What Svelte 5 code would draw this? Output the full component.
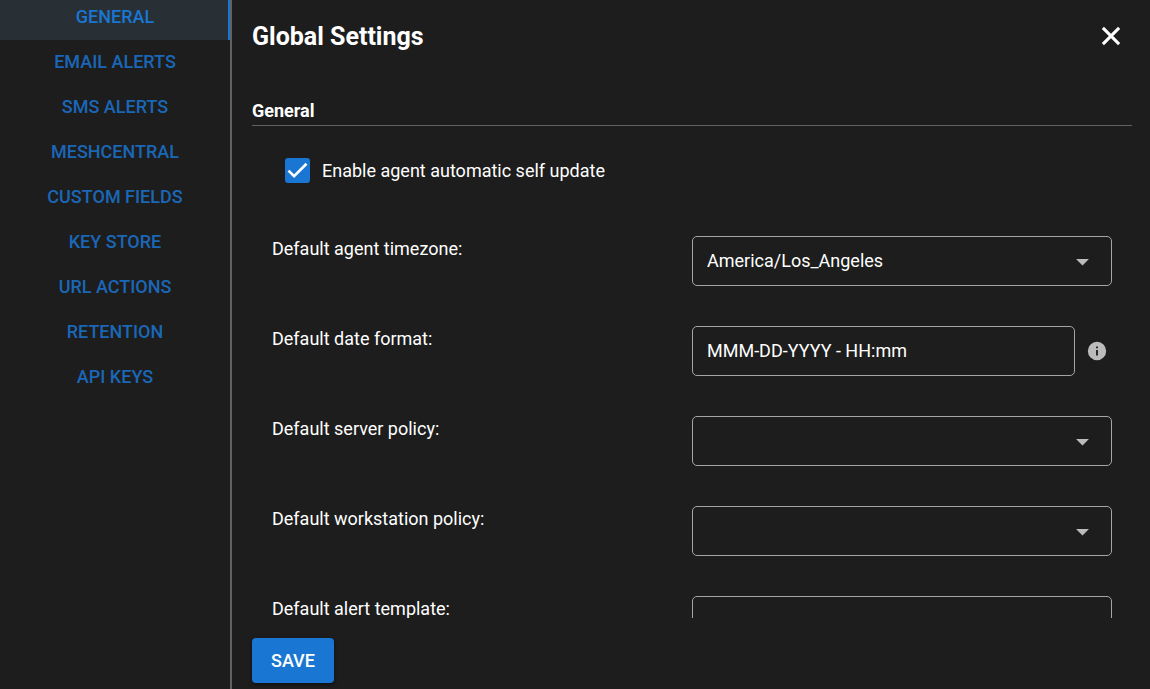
<script>
  const tabs = [
    'General',
    'Email Alerts',
    'SMS Alerts',
    'MeshCentral',
    'Custom Fields',
    'Key Store',
    'URL Actions',
    'Retention',
    'API Keys',
  ];
  let active = $state('General');
  let selfUpdate = $state(true);
  let dateFormat = $state('MMM-DD-YYYY - HH:mm');

  const timezone = { id: 'timezone', label: 'Default agent timezone:', options: ['America/Los_Angeles'] };
  const policies = [
    { id: 'server-policy', label: 'Default server policy:', options: [''] },
    { id: 'workstation-policy', label: 'Default workstation policy:', options: [''] },
    { id: 'alert-template', label: 'Default alert template:', options: [''] },
  ];
</script>

{#snippet selectRow(field)}
  <div class="row">
    <label for={field.id}>{field.label}</label>
    <div class="select">
      <select id={field.id} class="control">
        {#each field.options as option}
          <option>{option}</option>
        {/each}
      </select>
      <svg class="arrow" viewBox="0 0 24 24" aria-hidden="true"><path d="M7 10l5 5 5-5z" /></svg>
    </div>
  </div>
{/snippet}

<div class="settings">
  <nav class="tabs">
    {#each tabs as tab}
      <button type="button" class="tab" class:active={tab === active} onclick={() => (active = tab)}>
        {tab}
      </button>
    {/each}
  </nav>

  <form class="panel" onsubmit={(event) => event.preventDefault()}>
    <header>
      <h1>Global Settings</h1>
      <button type="button" class="close" aria-label="Close">
        <svg viewBox="0 0 24 24" aria-hidden="true">
          <path d="M4.5 4.5L19.5 19.5M19.5 4.5L4.5 19.5" />
        </svg>
      </button>
    </header>

    <div class="body">
      <h2>General</h2>

      <div class="row check-row">
        <label class="check">
          <input type="checkbox" bind:checked={selfUpdate} />
          <svg viewBox="0 0 24 24" aria-hidden="true"><path d="M1.7 12.1L8.1 18.5L22.3 4.3" /></svg>
          <span>Enable agent automatic self update</span>
        </label>
      </div>

      {@render selectRow(timezone)}

      <div class="row">
        <label for="date-format">Default date format:</label>
        <div class="with-hint">
          <input id="date-format" class="control" type="text" bind:value={dateFormat} />
          <button type="button" class="hint" aria-label="Date format help">
            <svg viewBox="0 0 24 24" aria-hidden="true">
              <path fill-rule="evenodd" d="M12 2a10 10 0 100 20 10 10 0 000-20zm1 15h-2v-6h2v6zm0-8h-2V7h2v2z" />
            </svg>
          </button>
        </div>
      </div>

      {#each policies as field}
        {@render selectRow(field)}
      {/each}
    </div>

    <footer>
      <button type="submit" class="save">Save</button>
    </footer>
  </form>
</div>

<style>
  :global(body) {
    margin: 0;
    background: #1d1d1d;
  }

  .settings,
  .settings * {
    box-sizing: border-box;
  }

  .settings {
    display: flex;
    height: 100vh;
    overflow: hidden;
    background: #1d1d1d;
    color: #fff;
    font: 400 18px/26px Roboto, sans-serif;
  }

  button,
  input,
  select {
    margin: 0;
    padding: 0;
    border: 0;
    background: none;
    color: inherit;
    font: inherit;
  }

  button {
    cursor: pointer;
  }

  .tabs {
    flex: none;
    display: flex;
    flex-direction: column;
    width: calc(20% + 2px);
    margin-top: -5px;
    border-right: 2px solid #616161;
  }

  .tab {
    flex: none;
    height: 45px;
    padding: 0 0 2px 2px;
    border-right: 2px solid transparent;
    color: #1b67b7;
    font-weight: 500;
    text-transform: uppercase;
  }

  .tab.active {
    background: #283036;
    color: #1976d2;
    border-right-color: #1976d2;
  }

  .panel {
    flex: 1;
    min-width: 0;
    display: flex;
    flex-direction: column;
    margin: 0;
  }

  header {
    flex: none;
    display: flex;
    align-items: center;
    justify-content: space-between;
    height: 72px;
    padding: 0 24px 0 20px;
  }

  h1 {
    margin: 0;
    padding-top: 2px;
    font-size: 25px;
    font-weight: 700;
    line-height: 40px;
  }

  .close {
    display: grid;
    place-items: center;
    width: 30px;
    height: 30px;
  }

  .close svg {
    width: 26px;
    height: 26px;
    fill: none;
    stroke: #fff;
    stroke-width: 2.8;
  }

  .body {
    flex: 1;
    min-height: 0;
    overflow-y: auto;
    scrollbar-width: none;
    padding: 26px 18px 0 20px;
  }

  h2 {
    margin: 0;
    padding-bottom: 1px;
    border-bottom: 1px solid #616161;
    font-size: 18px;
    font-weight: 700;
    line-height: 26px;
  }

  .row {
    display: grid;
    grid-template-columns: 1fr 1fr;
    align-items: start;
    padding: 20px;
    height: 90px;
  }

  .check-row {
    grid-template-columns: 1fr;
    padding: 32px 33px;
  }

  .check {
    display: grid;
    grid-template-columns: 25px auto;
    justify-content: start;
    align-items: center;
    column-gap: 12px;
    line-height: 25px;
    cursor: pointer;
  }

  .check input {
    grid-area: 1 / 1;
    appearance: none;
    width: 25px;
    height: 25px;
    border: 2px solid #b3b3b3;
    border-radius: 3px;
  }

  .check input:checked {
    background: #1976d2;
    border-color: #1976d2;
  }

  .check svg {
    grid-area: 1 / 1;
    justify-self: center;
    width: 21px;
    height: 21px;
    fill: none;
    stroke: #fff;
    stroke-width: 3;
    pointer-events: none;
  }

  .check input:not(:checked) + svg {
    visibility: hidden;
  }

  .control {
    width: 100%;
    min-width: 0;
    height: 50px;
    padding: 0 14px;
    border: 1px solid #a5a5a5;
    border-radius: 5px;
    color: #fff;
  }

  input.control {
    padding-bottom: 2px;
  }

  .select {
    display: grid;
    align-items: center;
  }

  .select .control {
    grid-area: 1 / 1;
    appearance: none;
  }

  .select option {
    background: #1d1d1d;
  }

  .arrow {
    grid-area: 1 / 1;
    justify-self: end;
    width: 31px;
    height: 31px;
    margin-right: 14px;
    fill: #bbb;
    pointer-events: none;
  }

  .with-hint {
    display: flex;
    align-items: center;
    gap: 11px;
  }

  .with-hint .control {
    flex: 1;
  }

  .hint {
    flex: none;
    display: grid;
    place-items: center;
    width: 22px;
    height: 22px;
    margin-right: 4px;
  }

  .hint svg {
    width: 22px;
    height: 22px;
    fill: #bbb;
  }

  footer {
    flex: none;
    padding: 20px 20px 6px;
  }

  .save {
    display: block;
    height: 45px;
    padding: 0 19px;
    border-radius: 4px;
    background: #1976d2;
    box-shadow: 0 1px 5px rgba(0, 0, 0, 0.3), 0 2px 2px rgba(0, 0, 0, 0.2);
    font-weight: 500;
    text-transform: uppercase;
  }
</style>
